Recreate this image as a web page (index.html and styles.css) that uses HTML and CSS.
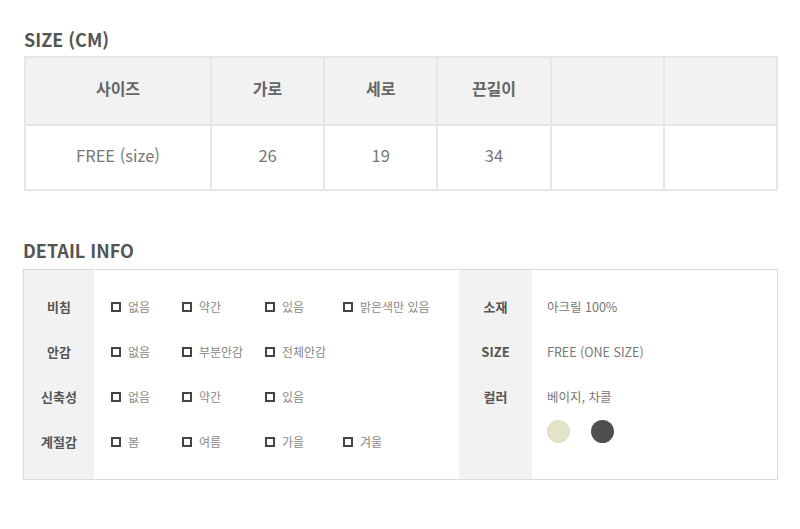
FILE: index.html
```html
<!DOCTYPE html>
<html lang="ko">
<head>
    <meta charset="UTF-8">
    <title>상품 상세 정보</title>
    <link rel="stylesheet" href="styles.css">
</head>
<body>
    <h2 class="section-title">SIZE (CM)</h2>
    <table class="size-table">
        <colgroup>
            <col class="col-first">
            <col><col><col><col><col>
        </colgroup>
        <thead>
            <tr>
                <th>사이즈</th>
                <th>가로</th>
                <th>세로</th>
                <th>끈길이</th>
                <th></th>
                <th></th>
            </tr>
        </thead>
        <tbody>
            <tr>
                <td>FREE (size)</td>
                <td>26</td>
                <td>19</td>
                <td>34</td>
                <td></td>
                <td></td>
            </tr>
        </tbody>
    </table>

    <h2 class="section-title detail-title">DETAIL INFO</h2>
    <div class="detail-box">
        <!-- left half -->
        <div class="detail-labels left-labels">
            <div class="detail-item">비침</div>
            <div class="detail-item">안감</div>
            <div class="detail-item">신축성</div>
            <div class="detail-item">계절감</div>
        </div>
        <div class="detail-options">
            <div class="option-row">
                <span class="option"><i class="check"></i>없음</span>
                <span class="option"><i class="check"></i>약간</span>
                <span class="option"><i class="check"></i>있음</span>
                <span class="option"><i class="check"></i>밝은색만 있음</span>
            </div>
            <div class="option-row">
                <span class="option"><i class="check"></i>없음</span>
                <span class="option"><i class="check"></i>부분안감</span>
                <span class="option"><i class="check"></i>전체안감</span>
            </div>
            <div class="option-row">
                <span class="option"><i class="check"></i>없음</span>
                <span class="option"><i class="check"></i>약간</span>
                <span class="option"><i class="check"></i>있음</span>
            </div>
            <div class="option-row">
                <span class="option"><i class="check"></i>봄</span>
                <span class="option"><i class="check"></i>여름</span>
                <span class="option"><i class="check"></i>가을</span>
                <span class="option"><i class="check"></i>겨울</span>
            </div>
        </div>

        <!-- right half -->
        <div class="detail-labels right-labels">
            <div class="detail-item">소재</div>
            <div class="detail-item">SIZE</div>
            <div class="detail-item">컬러</div>
        </div>
        <div class="detail-values">
            <div class="detail-item">아크릴 100%</div>
            <div class="detail-item">FREE (ONE SIZE)</div>
            <div class="detail-item">베이지, 차콜</div>
            <div class="swatches">
                <span class="swatch swatch-beige"></span>
                <span class="swatch swatch-charcoal"></span>
            </div>
        </div>
    </div>
</body>
</html>
```

FILE: styles.css
```css
* {
    margin: 0;
    padding: 0;
    box-sizing: border-box;
}

body {
    font-family: "Noto Sans CJK KR", "Noto Sans", sans-serif;
    background: #fff;
    color: #666;
    padding: 28px 23px 0 24px;
}

.section-title {
    font-size: 18px;
    line-height: 22px;
    font-weight: 700;
    color: #555;
    margin-bottom: 6px;
}

.detail-title {
    margin-top: 48px;
    margin-bottom: 8px;
    margin-left: -1px;
}

/* size table */
.size-table {
    width: 754px;
    border-collapse: collapse;
    table-layout: fixed;
}

.size-table .col-first {
    width: 186px;
}

.size-table th,
.size-table td {
    border: 2px solid #e6e6e6;
    text-align: center;
}

.size-table th {
    background: #f2f2f2;
    height: 68px;
    padding-bottom: 6px;
    font-size: 16px;
    font-weight: 700;
    color: #666;
}

.size-table td {
    height: 65px;
    padding-bottom: 5px;
    font-size: 16.5px;
    font-weight: 400;
    color: #777;
}

/* detail info */
.detail-box {
    display: flex;
    width: 755px;
    margin-left: -1px;
    border: 1px solid #dcdcdc;
    box-shadow: 0 0 2px rgba(0, 0, 0, 0.06);
}

.detail-labels {
    background: #f2f2f2;
    padding: 14px 0 15px;
    text-align: center;
    font-size: 13px;
    font-weight: 700;
    color: #555;
}

.left-labels {
    width: 70px;
}

.right-labels {
    width: 73px;
}

.detail-item {
    height: 45px;
    line-height: 45px;
    white-space: nowrap;
}

.detail-options {
    width: 365px;
    padding: 14px 0 15px 17px;
}

.option-row {
    display: grid;
    grid-template-columns: 71px 83px 78px auto;
    align-items: center;
    height: 45px;
}

.option {
    display: flex;
    align-items: center;
    font-size: 12px;
    color: #888;
    white-space: nowrap;
}

.check {
    width: 10px;
    height: 10px;
    border: 2px solid #444;
    margin-right: 7px;
    flex-shrink: 0;
}

.detail-values {
    flex: 1;
    padding: 14px 15px 15px;
    font-size: 12.5px;
    color: #777;
}

.swatches {
    display: flex;
    gap: 21px;
    margin-top: 1px;
}

.swatch {
    width: 23px;
    height: 23px;
    border-radius: 50%;
}

.swatch-beige {
    background: #e3e3c9;
    border: 1px solid #dcdcc4;
}

.swatch-charcoal {
    background: #4f4f4f;
}
```
